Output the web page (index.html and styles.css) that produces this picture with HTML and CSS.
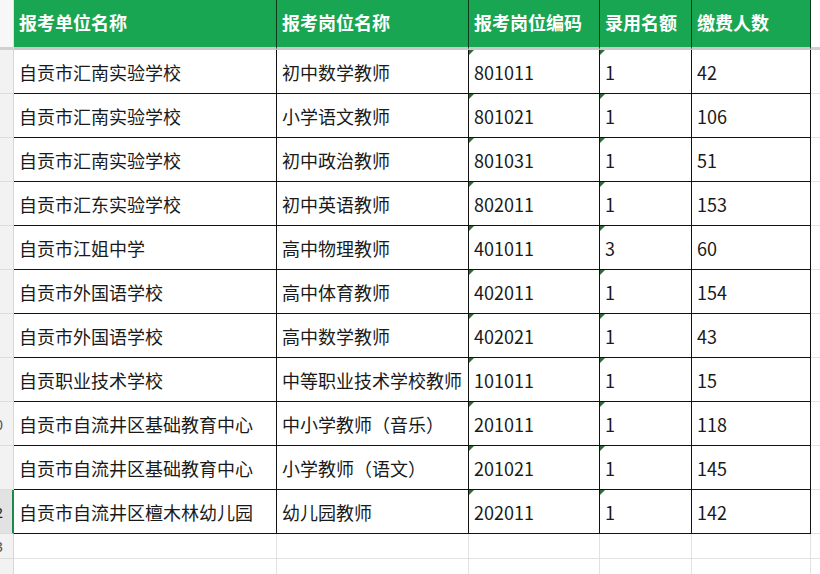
FILE: index.html
```html
<!DOCTYPE html>
<html lang="zh">
<head>
<meta charset="utf-8">
<link rel="stylesheet" href="styles.css">
</head>
<body>
<div class="sheet">
  <div class="row head">
    <div class="rh"></div>
    <div class="c">报考单位名称</div>
    <div class="c">报考岗位名称</div>
    <div class="c">报考岗位编码</div>
    <div class="c">录用名额</div>
    <div class="c">缴费人数</div>
    <div class="fill"></div>
  </div>
  <div class="row"><div class="rh"></div><div class="c">自贡市汇南实验学校</div><div class="c">初中数学教师</div><div class="c tri">801011</div><div class="c tri">1</div><div class="c">42</div><div class="fill"></div></div>
  <div class="row"><div class="rh"></div><div class="c">自贡市汇南实验学校</div><div class="c">小学语文教师</div><div class="c tri">801021</div><div class="c tri">1</div><div class="c">106</div><div class="fill"></div></div>
  <div class="row"><div class="rh"></div><div class="c">自贡市汇南实验学校</div><div class="c">初中政治教师</div><div class="c tri">801031</div><div class="c tri">1</div><div class="c">51</div><div class="fill"></div></div>
  <div class="row"><div class="rh"></div><div class="c">自贡市汇东实验学校</div><div class="c">初中英语教师</div><div class="c tri">802011</div><div class="c tri">1</div><div class="c">153</div><div class="fill"></div></div>
  <div class="row"><div class="rh"></div><div class="c">自贡市江姐中学</div><div class="c">高中物理教师</div><div class="c tri">401011</div><div class="c tri">3</div><div class="c">60</div><div class="fill"></div></div>
  <div class="row"><div class="rh"></div><div class="c">自贡市外国语学校</div><div class="c">高中体育教师</div><div class="c tri">402011</div><div class="c tri">1</div><div class="c">154</div><div class="fill"></div></div>
  <div class="row"><div class="rh"></div><div class="c">自贡市外国语学校</div><div class="c">高中数学教师</div><div class="c tri">402021</div><div class="c tri">1</div><div class="c">43</div><div class="fill"></div></div>
  <div class="row"><div class="rh"></div><div class="c">自贡职业技术学校</div><div class="c">中等职业技术学校教师</div><div class="c tri">101011</div><div class="c tri">1</div><div class="c">15</div><div class="fill"></div></div>
  <div class="row"><div class="rh"><span class="num">10</span></div><div class="c">自贡市自流井区基础教育中心</div><div class="c">中小学教师（音乐）</div><div class="c tri">201011</div><div class="c tri">1</div><div class="c">118</div><div class="fill"></div></div>
  <div class="row"><div class="rh"></div><div class="c">自贡市自流井区基础教育中心</div><div class="c">小学教师（语文）</div><div class="c tri">201021</div><div class="c tri">1</div><div class="c">145</div><div class="fill"></div></div>
  <div class="row sel"><div class="rh"><span class="num">12</span></div><div class="c">自贡市自流井区檀木林幼儿园</div><div class="c">幼儿园教师</div><div class="c tri">202011</div><div class="c tri">1</div><div class="c">142</div><div class="fill"></div></div>
  <div class="row empty"><div class="rh"><span class="num">13</span></div><div class="c"></div><div class="c"></div><div class="c"></div><div class="c"></div><div class="c"></div><div class="fill"></div></div>
  <div class="row empty"><div class="rh"></div><div class="c"></div><div class="c"></div><div class="c"></div><div class="c"></div><div class="c"></div><div class="fill"></div></div>
</div>
</body>
</html>
```
FILE: styles.css
```css
html, body {
  margin: 0;
  padding: 0;
  background: #ffffff;
  overflow: hidden;
}
.sheet {
  width: 820px;
  height: 574px;
  overflow: hidden;
  font-family: "Noto Sans CJK SC", "Noto Sans", sans-serif;
  font-size: 18px;
  color: #1a1a1a;
}
.row {
  display: grid;
  grid-template-columns: 14px 263px 192px 131px 92px 119px 1fr;
  height: 44px;
}
.rh {
  box-sizing: border-box;
  background: #f2f2f2;
  border-bottom: 1px solid #dcdcdc;
  border-right: 1px solid #d6d6d6;
  overflow: hidden;
  display: flex;
  align-items: center;
  justify-content: flex-end;
}
.num {
  font-family: "Noto Sans", sans-serif;
  font-size: 15px;
  color: #555;
  margin-right: 10px;
  white-space: nowrap;
}
.c {
  box-sizing: border-box;
  border-right: 1px solid #111;
  border-bottom: 1px solid #111;
  display: flex;
  align-items: center;
  padding-left: 5px;
  white-space: nowrap;
  position: relative;
}
.fill {
  box-sizing: border-box;
  border-bottom: 1px solid #e2e2e2;
}
.head {
  height: 50px;
}
.head .rh {
  background: #f7f7f7;
  border-right: 1px solid #e0e0e0;
  border-bottom: 3px solid #d0d0d0;
}
.head .c {
  background: #19a652;
  color: #ffffff;
  font-weight: bold;
  border-right: 1px solid #0d3b1c;
  border-bottom: 3px solid #c9c9c9;
  padding-bottom: 3px;
}
.head .c:first-of-type {
  padding-left: 4px;
}
.head .fill {
  border-bottom: 3px solid #d0d0d0;
}
.tri::before {
  content: "";
  position: absolute;
  left: 0;
  top: 0;
  border-top: 5px solid #2f6b3a;
  border-right: 5px solid transparent;
}
.sel .rh {
  background: #e2e2e2;
  border-right: 2px solid #1e8a4a;
}
.sel .num {
  color: #222;
  margin-right: 9px;
}
.empty {
  height: 25px;
}
.empty .c {
  border-right: 1px solid #e2e2e2;
  border-bottom: 1px solid #e2e2e2;
}
.empty .rh {
  background: #f2f2f2;
}
```
